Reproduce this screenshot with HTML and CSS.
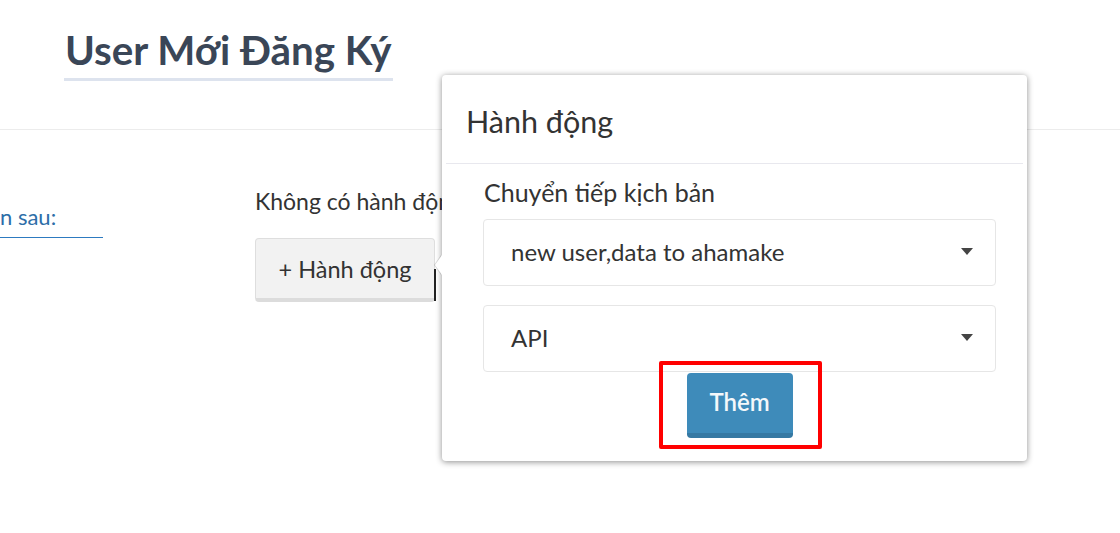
FILE: index.html
```html
<!DOCTYPE html>
<html lang="vi">
<head>
<meta charset="utf-8">
<link rel="stylesheet" href="styles.css">
</head>
<body>
<header class="top">
  <h1 class="title">User Mới Đăng Ký</h1>
</header>
<main class="content">
  <div class="col-left">
    <a class="step-link" href="#">n sau:</a>
  </div>
  <div class="col-actions">
    <p class="empty">Không có hành động</p>
    <div class="add-row">
      <button class="btn-add">+ Hành động</button>
      <span class="cursor"></span>
    </div>
  </div>
</main>
<div class="popover">
  <span class="arrow"></span>
  <div class="pop-head">Hành động</div>
  <div class="pop-body">
    <label class="pop-label">Chuyển tiếp kịch bản</label>
    <div class="select"><span>new user,data to ahamake</span><span class="caret"></span></div>
    <div class="select"><span>API</span><span class="caret"></span></div>
    <div class="submit-row">
      <div class="highlight">
        <button class="btn-primary">Thêm</button>
      </div>
    </div>
  </div>
</div>
</body>
</html>
```
FILE: styles.css
```css
* { box-sizing: border-box; }
html, body { margin: 0; padding: 0; background: #fff; }
body {
  font-family: "Lato", "Open Sans", "Liberation Sans", sans-serif;
  color: #333;
  position: relative;
  height: 533px;
  overflow: hidden;
}
.top {
  height: 130px;
  border-bottom: 1px solid #ececec;
  padding: 26px 0 0 64px;
}
.title {
  display: inline-block;
  margin: 0;
  font-size: 40.3px;
  font-weight: 700;
  color: #3a4657;
  line-height: 48px;
  padding: 0 1px 4px;
  border-bottom: 3px solid #dde3ee;
}
.content {
  display: flex;
  padding-top: 56px;
}
.col-left {
  width: 103px;
  padding-top: 18px;
}
.step-link {
  display: block;
  color: #2d6ea8;
  text-decoration: none;
  font-size: 22px;
  line-height: 26px;
  padding-bottom: 7px;
  border-bottom: 1px solid #2d7ac0;
}
.col-actions {
  margin-left: 152px;
}
.empty {
  margin: 0 0 22px 0;
  font-size: 23px;
  line-height: 30px;
  color: #333;
}
.add-row {
  display: flex;
  align-items: flex-end;
}
.btn-add {
  width: 180px;
  height: 64px;
  font-family: inherit;
  font-size: 23.5px;
  color: #333;
  background: #f2f2f2;
  border: 1px solid #dedede;
  border-bottom: 4px solid #dcdcdc;
  border-radius: 4px;
  padding: 0;
}
.cursor {
  width: 2px;
  height: 32px;
  background: #222;
  margin-left: -1px;
  margin-bottom: 1px;
}
.popover {
  position: absolute;
  left: 442px;
  top: 75px;
  width: 585px;
  height: 386px;
  background: #fff;
  border-radius: 4px;
  box-shadow: 0 1px 6px rgba(0,0,0,0.45);
}
.arrow {
  position: absolute;
  left: -7px;
  top: 180px;
  width: 0;
  height: 0;
  border-top: 10px solid transparent;
  border-bottom: 10px solid transparent;
  border-right: 7px solid #fff;
  filter: drop-shadow(-1px 0 0 rgba(0,0,0,0.15));
}
.pop-head {
  margin: 0 4px;
  height: 89px;
  padding: 27px 0 0 20px;
  font-size: 30.5px;
  line-height: 38px;
  color: #333;
  border-bottom: 1px solid #e8e8ee;
}
.pop-body {
  padding: 12px 31px 0 41px;
}
.pop-label {
  display: block;
  font-size: 25px;
  line-height: 32px;
  margin: 0 0 11px 1px;
  color: #333;
}
.select {
  height: 67px;
  border: 1px solid #e6e6e6;
  border-radius: 4px;
  display: flex;
  align-items: center;
  justify-content: space-between;
  padding: 0 22px 3px 27px;
  font-size: 24px;
  color: #333;
  margin-bottom: 19px;
}
.select + .select { margin-bottom: 0; }
.caret {
  width: 0;
  height: 0;
  border-left: 6px solid transparent;
  border-right: 6px solid transparent;
  border-top: 7px solid #444;
  margin-top: 0;
}
.submit-row {
  display: flex;
  justify-content: center;
  padding-top: 1px;
}
.highlight {
  position: relative;
}
.highlight::after {
  content: "";
  position: absolute;
  left: -28px;
  right: -29px;
  top: -12px;
  bottom: -11px;
  border: 4px solid #ff0000;
  border-radius: 2px;
}
.btn-primary {
  display: block;
  width: 106px;
  height: 65px;
  font-family: inherit;
  font-size: 24px;
  font-weight: 600;
  color: #f4f8fb;
  background: #3e8bba;
  border: none;
  border-bottom: 5px solid #3679a3;
  border-radius: 4px;
  padding: 0 0 4px;
}
```
